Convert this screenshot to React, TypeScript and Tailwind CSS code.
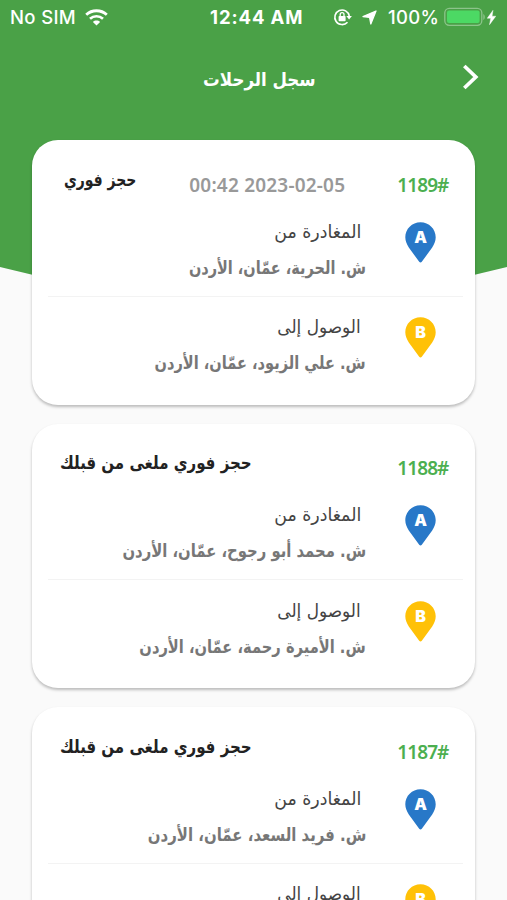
import clsx from "clsx";

interface Stop {
  label: string;
  labelFit: string;
  address: string;
  addressFit: string;
}

interface Trip {
  id: string;
  date?: string;
  status: string;
  statusFit: string;
  from: Stop;
  to: Stop;
}

// Horizontal condensing per string, the Arabic fallback runs wide
const from = { label: "المغادرة من", labelFit: "scale-x-[.965]" };
const to = { label: "الوصول إلى", labelFit: "scale-x-[.94]" };

const trips: Trip[] = [
  {
    id: "1189#",
    date: "00:42 2023-02-05",
    status: "حجز فوري",
    statusFit: "ml-[4px] scale-x-[.775]",
    from: { ...from, address: "ش. الحرية، عمّان، الأردن", addressFit: "scale-x-[.805]" },
    to: { ...to, address: "ش. علي الزيود، عمّان، الأردن", addressFit: "scale-x-[.81]" },
  },
  {
    id: "1188#",
    status: "حجز فوري ملغى من قبلك",
    statusFit: "scale-x-[.835]",
    from: { ...from, address: "ش. محمد أبو رجوح، عمّان، الأردن", addressFit: "scale-x-[.823]" },
    to: { ...to, address: "ش. الأميرة رحمة، عمّان، الأردن", addressFit: "scale-x-[.815]" },
  },
  {
    id: "1187#",
    status: "حجز فوري ملغى من قبلك",
    statusFit: "scale-x-[.835]",
    from: { ...from, address: "ش. فريد السعد، عمّان، الأردن", addressFit: "scale-x-[.83]" },
    to: { ...to, address: "ش. الأميرة رحمة، عمّان، الأردن", addressFit: "scale-x-[.815]" },
  },
];

function StatusBar() {
  return (
    <div className="flex h-[34px] items-center px-[10px] font-['Inter',sans-serif] text-[18.5px] leading-[34px] font-medium text-white">
      <div className="flex w-[200px] items-center gap-[9px]">
        <span className="w-[66px] tracking-[.35px] whitespace-nowrap">No SIM</span>
        <svg className="h-[17px] w-[23px]" viewBox="0 0 23 17" fill="none" stroke="white">
          <path d="M1.2 5.8C7 .4 16 .4 21.8 5.8" strokeWidth="2.8" />
          <path d="M5 9.8c3.7-3.4 9.3-3.4 13 0" strokeWidth="2.7" />
          <path d="M11.5 16.5 7.9 12.9c2-1.9 5.2-1.9 7.2 0z" fill="white" stroke="none" />
        </svg>
      </div>
      <span className="w-[94px] tracking-[.9px] whitespace-nowrap font-bold">12:44 AM</span>
      <div className="ml-[29px] flex items-center">
        <svg className="h-[18px] w-[20px]" viewBox="0 0 20 18" fill="none" stroke="white" strokeWidth="1.6">
          <path d="M14.5 14.2A7.3 7.3 0 1 1 16.3 8" />
          <path d="M13.3 8h5.6l-2.8 3.4z" fill="white" stroke="none" />
          <rect x="5.6" y="8" width="7" height="5.2" rx=".8" fill="white" stroke="none" />
          <path d="M7.2 8.3V6.6a1.9 1.9 0 0 1 3.8 0v1.7" strokeWidth="1.3" />
        </svg>
        <svg className="ml-[9px] h-[15px] w-[15px]" viewBox="0 0 15 15">
          <path
            d="M14 1 8.8 14 7.6 7.4 1 6.6z"
            fill="white"
            stroke="white"
            strokeWidth="1.3"
            strokeLinejoin="round"
          />
        </svg>
        <span className="ml-[11px] w-[52px] tracking-[.3px] whitespace-nowrap">100%</span>
        <svg className="ml-[4px] h-[20px] w-[42px]" viewBox="0 0 42 20">
          <rect x=".8" y="1.3" width="37" height="17" rx="4.5" fill="none" stroke="#8cc48a" strokeWidth="1.3" />
          <rect x="3" y="3.5" width="32.6" height="12.6" rx="2" fill="#4cd964" />
          <path d="M39.3 7c2 .8 2 5.2 0 6z" fill="#8cc48a" />
        </svg>
        <svg className="ml-px h-[15px] w-[9px]" viewBox="0 0 9 15">
          <path d="M6 .3.2 8.3h3.5L2.5 14.7 8.8 6.2H5.1z" fill="white" stroke="white" strokeWidth=".4" />
        </svg>
      </div>
    </div>
  );
}

function Header() {
  return (
    <header className="flex h-[106px] items-start text-white">
      <h1
        dir="rtl"
        className="mt-[30px] ml-[204px] w-[112px] text-[19px] leading-[30px] font-bold whitespace-nowrap"
      >
        <span className="inline-block origin-right scale-x-[.875]">سجل الرحلات</span>
      </h1>
      <svg className="mt-[30px] ml-[146px] h-[26px] w-[18px]" viewBox="0 0 18 26" fill="none">
        <path d="M2.3 2l11.5 11L2.3 24" stroke="white" strokeWidth="3.7" />
      </svg>
    </header>
  );
}

function Pin({ letter, className }: { letter: string; className: string }) {
  return (
    <svg className={clsx("h-[41px] w-[31px] shrink-0", className)} viewBox="0 0 31 41">
      <path
        d="M15.5.3C7 .3.3 7 .3 15.3c0 3.7 1.5 7 3.5 10.2L14.2 39.8c.7 1 1.9 1 2.6 0L27.2 25.5c2-3.2 3.5-6.5 3.5-10.2C30.7 7 24 .3 15.5.3z"
        fill="currentColor"
      />
      <text
        x="15.5"
        y="20.5"
        textAnchor="middle"
        className="fill-white font-['Inter',sans-serif] text-[16px] font-black"
      >
        {letter}
      </text>
    </svg>
  );
}

function StopRow({ stop, letter, pinClass }: { stop: Stop; letter: string; pinClass: string }) {
  return (
    <div className="flex items-start pr-[39px] pl-4">
      <div dir="rtl" className="mr-[39px] flex-1 whitespace-nowrap">
        <p className="pr-[5px] text-[18px] leading-[20px] text-[#444]">
          <span className={clsx("inline-block origin-right", stop.labelFit)}>{stop.label}</span>
        </p>
        <p className="mt-[16px] text-[18px] leading-[20px] font-bold text-[#777]">
          <span className={clsx("inline-block origin-right", stop.addressFit)}>{stop.address}</span>
        </p>
      </div>
      <Pin letter={letter} className={pinClass} />
    </div>
  );
}

function TripCard({ trip }: { trip: Trip }) {
  return (
    <article className="h-[264.5px] rounded-[26px] bg-white shadow-[0_2px_3px_rgba(0,0,0,0.25)]">
      <div className="flex h-[81.2px] items-start justify-between pt-[29.2px] pr-[26.5px] pl-[28px] whitespace-nowrap">
        <p className="w-[100px] text-[18px] leading-[20px] font-bold text-[#222]">
          <span dir="rtl" className={clsx("inline-block origin-left", trip.statusFit)}>
            {trip.status}
          </span>
        </p>
        <div className="flex pt-[3px] font-['Noto_Sans',sans-serif] text-[19px] leading-[24px] font-semibold">
          {trip.date && <time className="mr-[52px] tracking-[.2px] text-[#999]">{trip.date}</time>}
          <span className="tracking-[-.9px] text-[#4caf50]">{trip.id}</span>
        </div>
      </div>
      <StopRow stop={trip.from} letter="A" pinClass="text-[#2878c8]" />
      <hr className="mt-[18px] mr-3 mb-[20.5px] ml-4 border-[#f3f3f3]" />
      <StopRow stop={trip.to} letter="B" pinClass="text-[#ffc107]" />
    </article>
  );
}

export default function App() {
  return (
    <main className="grid h-[900px] w-[507px] overflow-hidden bg-[#fafafa] font-['DejaVu_Sans',sans-serif]">
      <svg className="col-start-1 row-start-1 h-[330px] w-[507px]" viewBox="0 0 507 330">
        <path d="M0 0H507V267Q253.5 332 0 267z" fill="#4aa147" />
      </svg>
      <div className="z-10 col-start-1 row-start-1 h-[900px]">
        <StatusBar />
        <Header />
        <section className="flex flex-col gap-[19px] px-8 pt-[.4px]">
          {trips.map((trip) => (
            <TripCard key={trip.id} trip={trip} />
          ))}
        </section>
      </div>
    </main>
  );
}
